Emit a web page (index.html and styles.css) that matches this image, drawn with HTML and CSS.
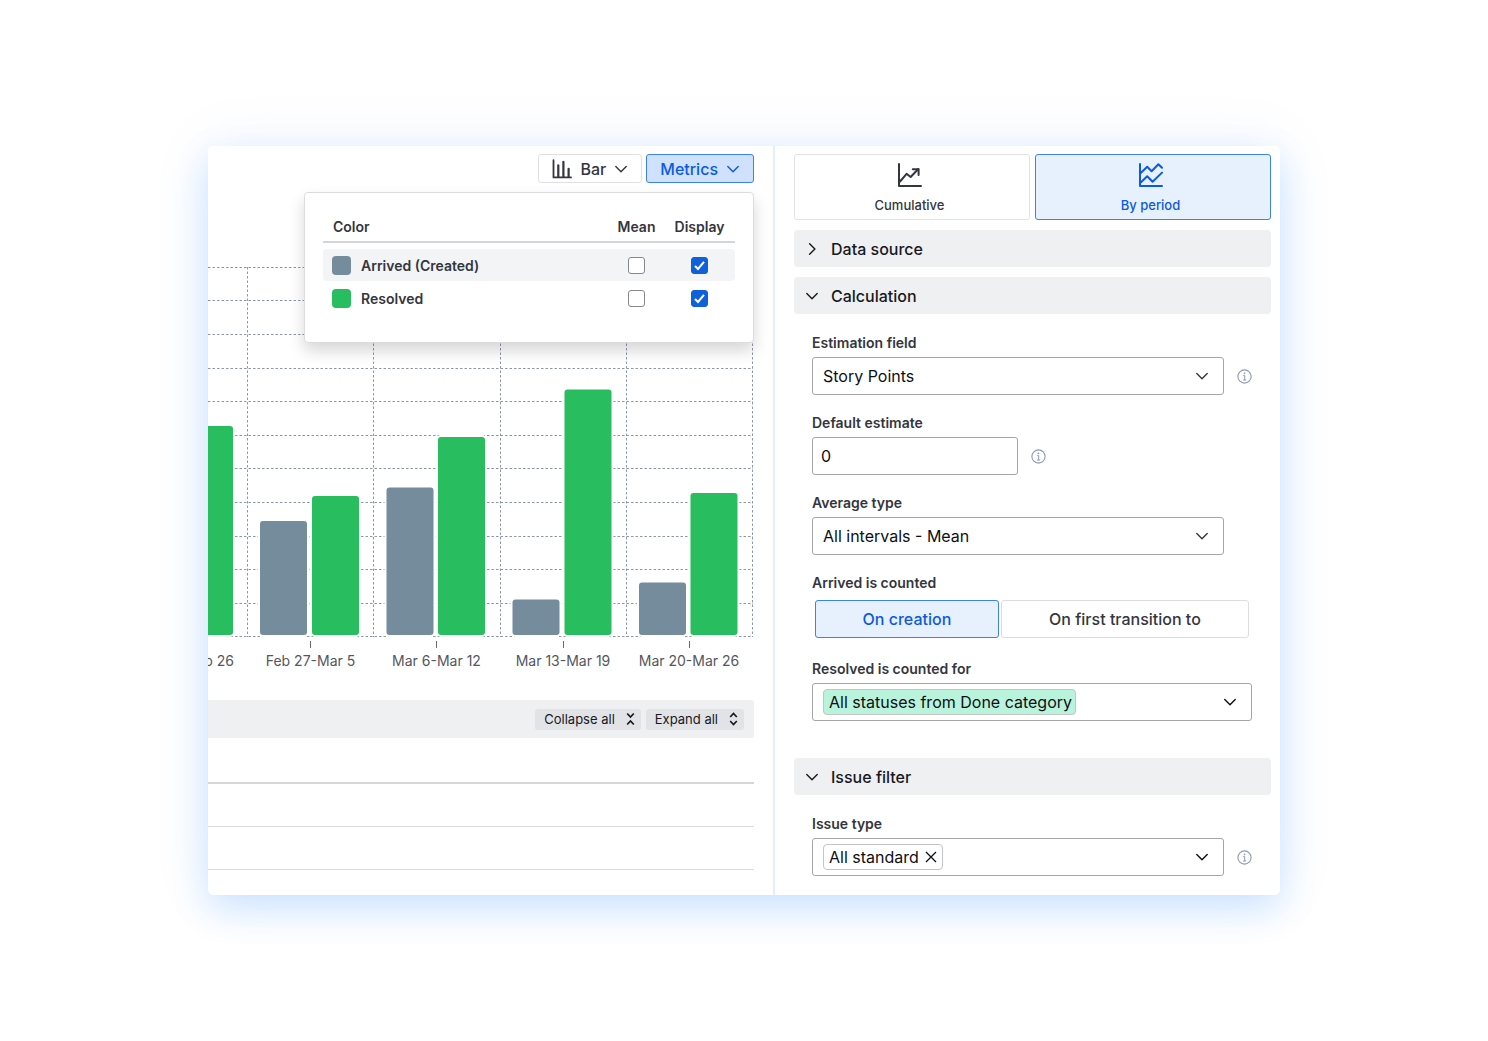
FILE: index.html
```html
<!DOCTYPE html>
<html lang="en">
<head>
    <meta charset="UTF-8">
    <meta name="viewport" content="width=device-width, initial-scale=1.0">
    <title>Created vs Resolved Chart</title>
    <link rel="stylesheet" href="styles.css">
</head>

<body>
    <!-- Shared icons -->
    <svg class="sprite" aria-hidden="true">
        <symbol id="chevron-down" viewBox="0 0 12 12">
            <path d="M0.8 3.4 L6 8.7 L11.2 3.4" fill="none" stroke="currentColor" stroke-width="1.4" stroke-linecap="round" stroke-linejoin="round"/>
        </symbol>
        <symbol id="chevron-right" viewBox="0 0 12 12">
            <path d="M3.6 0.8 L8.9 6 L3.6 11.2" fill="none" stroke="currentColor" stroke-width="1.4" stroke-linecap="round" stroke-linejoin="round"/>
        </symbol>
        <symbol id="info" viewBox="0 0 15 15">
            <circle cx="7.5" cy="7.5" r="6.6" fill="none" stroke="currentColor" stroke-width="1.1"/>
            <circle cx="7.5" cy="4.3" r="0.9" fill="currentColor"/>
            <path d="M6.1 6.6 H7.7 V11 M6 11 H9.2" fill="none" stroke="currentColor" stroke-width="1"/>
        </symbol>
    </svg>

    <main class="card">
        <!-- Chart side -->
        <section class="chart-pane">
            <div class="toolbar">
                <button type="button" class="tool-btn">
                    <svg class="bar-icon" viewBox="0 0 20 20" fill="none" stroke="currentColor" stroke-linecap="round" stroke-linejoin="round">
                        <path d="M1.5 1.2 V18.4 H19" stroke-width="1.8"/>
                        <path d="M6.3 6.3 V17.5 M11.4 2.8 V17.5 M16.6 9.8 V17.5" stroke-width="2.2"/>
                    </svg>
                    Bar
                    <svg class="chevron"><use href="#chevron-down"/></svg>
                </button>
                <button type="button" class="tool-btn active">
                    Metrics
                    <svg class="chevron"><use href="#chevron-down"/></svg>
                </button>

                <div class="popover">
                    <table class="metrics">
                        <thead>
                            <tr>
                                <th class="name-col">Color</th>
                                <th class="mean-col">Mean</th>
                                <th class="display-col">Display</th>
                            </tr>
                        </thead>
                        <tbody>
                            <tr class="highlight">
                                <td><span class="metric"><span class="swatch arrived"></span>Arrived (Created)</span></td>
                                <td><input type="checkbox" aria-label="Arrived mean"></td>
                                <td><input type="checkbox" aria-label="Display arrived" checked></td>
                            </tr>
                            <tr>
                                <td><span class="metric"><span class="swatch resolved"></span>Resolved</span></td>
                                <td><input type="checkbox" aria-label="Resolved mean"></td>
                                <td><input type="checkbox" aria-label="Display resolved" checked></td>
                            </tr>
                        </tbody>
                    </table>
                </div>
            </div>

            <svg class="chart" viewBox="0 0 546 438" role="img" aria-label="Arrived and resolved issues by week">
                <g class="grid">
                    <path d="M0 5.5 H545 M0 38.5 H545 M0 72.5 H545 M0 106.5 H545 M0 139.5 H545 M0 173.5 H545"/>
                    <path d="M0 206.5 H545 M0 240.5 H545 M0 274.5 H545 M0 307.5 H545 M0 341.5 H545 M0 374.5 H545"/>
                    <path d="M39.5 5 V375 M165.5 5 V375 M292.5 5 V375 M418.5 5 V375 M544.5 5 V375"/>
                </g>
                <g class="bar-arrived">
                    <rect x="52" y="259" width="47" height="114" rx="3"/>
                    <rect x="178.5" y="225.5" width="47" height="147.5" rx="3"/>
                    <rect x="304.5" y="337.5" width="47" height="35.5" rx="3"/>
                    <rect x="431" y="320.5" width="47" height="52.5" rx="3"/>
                </g>
                <g class="bar-resolved">
                    <rect x="-22" y="164" width="47" height="209" rx="3"/>
                    <rect x="104" y="234" width="47" height="139" rx="3"/>
                    <rect x="230" y="175" width="47" height="198" rx="3"/>
                    <rect x="356.5" y="127.5" width="47" height="245.5" rx="3"/>
                    <rect x="482.5" y="231" width="47" height="142" rx="3"/>
                </g>
                <path class="ticks" d="M102.5 379 V386 M228.5 379 V386 M355.5 379 V386 M481.5 379 V386"/>
                <g class="axis-labels">
                    <text x="-23" y="404">Feb 20-Feb 26</text>
                    <text x="102.5" y="404">Feb 27-Mar 5</text>
                    <text x="228.5" y="404">Mar 6-Mar 12</text>
                    <text x="355" y="404">Mar 13-Mar 19</text>
                    <text x="481" y="404">Mar 20-Mar 26</text>
                </g>
            </svg>

            <div class="list-bar">
                <button type="button" class="small-btn">
                    Collapse all
                    <svg viewBox="0 0 9 14"><path d="M1.2 1.5 L4.5 5 L7.8 1.5 M1.2 12.5 L4.5 9 L7.8 12.5"/></svg>
                </button>
                <button type="button" class="small-btn">
                    Expand all
                    <svg viewBox="0 0 9 14"><path d="M1.2 5 L4.5 1.5 L7.8 5 M1.2 9 L4.5 12.5 L7.8 9"/></svg>
                </button>
            </div>
            <div class="list">
                <div class="list-head"></div>
                <div class="list-row"></div>
                <div class="list-row"></div>
            </div>
        </section>

        <!-- Settings side -->
        <aside class="settings">
            <div class="tabs">
                <button type="button" class="tab">
                    <svg viewBox="0 0 24 24" fill="none" stroke="currentColor" stroke-width="2" stroke-linecap="round" stroke-linejoin="round">
                        <path d="M1 1 V23 H23"/>
                        <path d="M2 18.5 L8.6 10.8 L12.6 14 L20.3 6"/>
                        <path d="M14.8 6.2 H20.6 V12"/>
                    </svg>
                    Cumulative
                </button>
                <button type="button" class="tab active">
                    <svg viewBox="0 0 24 24" fill="none" stroke="currentColor" stroke-width="2" stroke-linecap="round" stroke-linejoin="round">
                        <path d="M1 1 V23 H23"/>
                        <path d="M2 9.8 L8.2 3.8 L12.6 8.2 L19.4 1.2 L23 4.8"/>
                        <path d="M2 19.3 L8.2 13.3 L13.6 18.7 L23 9.6"/>
                    </svg>
                    By period
                </button>
            </div>

            <button type="button" class="section-head">
                <svg class="chevron"><use href="#chevron-right"/></svg>
                Data source
            </button>

            <button type="button" class="section-head">
                <svg class="chevron"><use href="#chevron-down"/></svg>
                Calculation
            </button>
            <div class="section-body">
                <div class="field">
                    <label for="estimation">Estimation field</label>
                    <div class="control-row">
                        <div class="select">
                            <select id="estimation">
                                <option>Story Points</option>
                            </select>
                            <svg class="chevron"><use href="#chevron-down"/></svg>
                        </div>
                        <svg class="info"><use href="#info"/></svg>
                    </div>
                </div>

                <div class="field">
                    <label for="default-estimate">Default estimate</label>
                    <div class="control-row">
                        <input type="text" id="default-estimate" class="text-input" value="0">
                        <svg class="info"><use href="#info"/></svg>
                    </div>
                </div>

                <div class="field">
                    <label for="average">Average type</label>
                    <div class="control-row no-info">
                        <div class="select">
                            <select id="average">
                                <option>All intervals - Mean</option>
                            </select>
                            <svg class="chevron"><use href="#chevron-down"/></svg>
                        </div>
                    </div>
                </div>

                <div class="field">
                    <span class="label" id="arrived-label">Arrived is counted</span>
                    <div class="toggle" role="group" aria-labelledby="arrived-label">
                        <button type="button" class="active">On creation</button>
                        <button type="button">On first transition to</button>
                    </div>
                </div>

                <div class="field">
                    <span class="label" id="resolved-label">Resolved is counted for</span>
                    <div class="tag-select" role="combobox" tabindex="0" aria-expanded="false" aria-labelledby="resolved-label">
                        <span class="tag done">All statuses from Done category</span>
                        <svg class="chevron"><use href="#chevron-down"/></svg>
                    </div>
                </div>
            </div>

            <button type="button" class="section-head">
                <svg class="chevron"><use href="#chevron-down"/></svg>
                Issue filter
            </button>
            <div class="section-body last">
                <div class="field">
                    <span class="label" id="type-label">Issue type</span>
                    <div class="control-row">
                        <div class="tag-select" role="combobox" tabindex="0" aria-expanded="false" aria-labelledby="type-label">
                            <span class="tag">
                                All standard
                                <button type="button" class="remove" aria-label="Remove">
                                    <svg viewBox="0 0 12 12"><path d="M1 1 L11 11 M11 1 L1 11"/></svg>
                                </button>
                            </span>
                            <svg class="chevron"><use href="#chevron-down"/></svg>
                        </div>
                        <svg class="info"><use href="#info"/></svg>
                    </div>
                </div>
            </div>
        </aside>
    </main>
</body>
</html>
```

FILE: styles.css
```css
* {
    box-sizing: border-box;
}

body {
    margin: 0;
    padding: 146px 208px;
    background-color: white;
    color: #34363e;
    font-family: Inter, "Liberation Sans", sans-serif;
    font-size: 16px;
}

button, input, select {
    font: inherit;
    color: inherit;
    margin: 0;
}

button {
    cursor: pointer;
}

.sprite {
    display: none;
}

.chevron {
    width: 12px;
    height: 12px;
    flex: none;
}

.info {
    width: 15px;
    height: 15px;
    flex: none;
    color: #8c9bb5;
}

.card {
    display: flex;
    background-color: white;
    border-radius: 5px;
    box-shadow: 0 14px 36px rgba(40, 140, 255, 0.2), 0 0 60px rgba(40, 120, 255, 0.09);
}

/* Chart side */
.chart-pane {
    flex: 1;
    min-width: 0;
    padding: 8px 19px 0 0;
}

.toolbar {
    display: flex;
    justify-content: flex-end;
    gap: 4px;
    position: relative;
    margin-bottom: 79px;
}

.tool-btn {
    display: flex;
    align-items: center;
    gap: 9px;
    height: 29px;
    padding: 0 14px 0 13px;
    background-color: white;
    border: 1px solid #dfe0e2;
    border-radius: 3px;
    font-weight: 500;
}

.tool-btn.active {
    background-color: #cfe1fd;
    border-color: #3b82ee;
    color: #0c5ae0;
}

.bar-icon {
    width: 20px;
    height: 20px;
}

.popover {
    position: absolute;
    top: 38px;
    right: 0;
    width: 450px;
    height: 151px;
    padding: 17px 18px;
    background-color: white;
    border: 1px solid #dcdcde;
    border-radius: 4px;
    box-shadow: 0 8px 16px rgba(0, 0, 0, 0.16);
}

.metrics {
    width: 100%;
    border-spacing: 0 1px;
    font-size: 14px;
    font-weight: 600;
}

.metrics th {
    height: 32px;
    padding: 0;
    border-bottom: 2px solid #d5d6d8;
    font-weight: 600;
}

.metrics th.name-col {
    padding-left: 10px;
    text-align: left;
}

.mean-col {
    width: 55px;
}

.display-col {
    width: 71px;
}

.metrics tbody::before {
    content: "";
    display: block;
    height: 4px;
}

.metrics td {
    height: 32px;
    padding: 0;
    text-align: center;
}

.metrics td:first-child {
    padding-left: 9px;
    border-radius: 4px 0 0 4px;
}

.metrics td:last-child {
    border-radius: 0 4px 4px 0;
}

.highlight td {
    background-color: #f3f4f6;
}

.metric {
    display: flex;
    align-items: center;
    gap: 10px;
}

.swatch {
    width: 19px;
    height: 19px;
    border-radius: 4px;
}

.swatch.arrived {
    background-color: #748c9c;
}

.swatch.resolved {
    background-color: #28bd5f;
}

.metrics input {
    appearance: none;
    display: block;
    width: 17px;
    height: 17px;
    margin: 0 auto;
    background-color: white;
    border: 1px solid #85878f;
    border-radius: 3px;
}

.metrics input:checked {
    border-color: #1060dc;
    background: #1060dc url("data:image/svg+xml,%3Csvg xmlns='http://www.w3.org/2000/svg' viewBox='0 0 15 15'%3E%3Cpath d='M3 8 L6 11 L12 3.8' fill='none' stroke='white' stroke-width='2'/%3E%3C/svg%3E") center / 15px no-repeat;
}

.chart {
    display: block;
    width: 100%;
}

.grid {
    fill: none;
    stroke: #8d97ab;
    stroke-width: 1;
    stroke-dasharray: 2.5 2;
}

.bar-arrived,
.bar-resolved {
    stroke: white;
    stroke-width: 4;
    paint-order: stroke;
}

.bar-arrived {
    fill: #748c9c;
}

.bar-resolved {
    fill: #28bd5f;
}

.ticks {
    stroke: #6a6d75;
}

.axis-labels {
    fill: #55575e;
    font-size: 14px;
    text-anchor: middle;
}

.list-bar {
    display: flex;
    justify-content: flex-end;
    align-items: center;
    gap: 5px;
    height: 38px;
    padding-right: 10px;
    background-color: #eff0f2;
    border-radius: 0 3px 3px 0;
}

.small-btn {
    display: flex;
    align-items: center;
    gap: 11px;
    height: 21px;
    padding: 0 6px 0 9px;
    background-color: #e2e3e7;
    border: 0;
    border-radius: 3px;
    color: #17191f;
    font-size: 13px;
}

.small-btn svg {
    width: 9px;
    height: 14px;
    fill: none;
    stroke: currentColor;
    stroke-width: 1.7;
}

.list-head {
    height: 46px;
    border-bottom: 2px solid #d6d6d6;
}

.list-row {
    height: 43px;
    border-bottom: 1px solid #dcdcdc;
}

/* Settings side */
.settings {
    flex: 0 0 507px;
    padding: 8px 9px 0 19px;
    border-left: 2px solid #e3effe;
}

.tabs {
    display: flex;
    gap: 5px;
    margin-bottom: 10px;
}

.tab {
    display: flex;
    flex: 1;
    flex-direction: column;
    align-items: center;
    gap: 10px;
    height: 66px;
    padding: 8px 5px 0 0;
    background-color: white;
    border: 1px solid #e2e3e5;
    border-radius: 3px;
    font-size: 13px;
    font-weight: 500;
}

.tab svg {
    width: 24px;
    height: 24px;
}

.tab.active,
.toggle .active {
    background-color: #e7f1fe;
    border-color: #3b82ee;
    color: #0c5ae0;
}

.section-head {
    display: flex;
    align-items: center;
    gap: 13px;
    width: 100%;
    height: 37px;
    margin-bottom: 10px;
    padding: 0 12px;
    background-color: #eff0f2;
    border: 0;
    border-radius: 4px;
    color: #17191f;
    font-weight: 500;
}

.section-body {
    display: flex;
    flex-direction: column;
    gap: 18px;
    padding: 9px 19px 37px 18px;
}

.section-body.last {
    padding-bottom: 19px;
}

.field {
    display: flex;
    flex-direction: column;
    gap: 4px;
}

.field label,
.label {
    font-size: 14px;
    font-weight: 600;
    line-height: 20px;
}

.control-row {
    display: flex;
    align-items: center;
    gap: 13px;
}

.control-row.no-info {
    padding-right: 28px;
}

.select {
    position: relative;
    flex: 1;
}

.select select,
.text-input,
.tag-select {
    height: 38px;
    background-color: white;
    border: 1px solid #a3a5ab;
    border-radius: 3px;
    color: #0d0f14;
}

.select select {
    display: block;
    width: 100%;
    padding: 0 10px;
    appearance: none;
}

.select .chevron {
    position: absolute;
    top: 13px;
    right: 16px;
    pointer-events: none;
}

.text-input {
    width: 206px;
    padding: 0 8px;
}

.tag-select {
    display: flex;
    flex: 1 0 auto;
    align-items: center;
    justify-content: space-between;
    padding: 0 15px 0 10px;
}

.tag {
    display: flex;
    align-items: center;
    gap: 6px;
    height: 26px;
    padding: 0 5px;
    border: 1px solid #c3c5c9;
    border-radius: 4px;
}

.tag.done {
    padding: 0 3px 0 5px;
    background-color: #baf3db;
}

.remove {
    display: flex;
    padding: 0;
    background: none;
    border: 0;
}

.remove svg {
    width: 12px;
    height: 12px;
    stroke: currentColor;
    stroke-width: 1.3;
}

.toggle {
    display: flex;
    gap: 2px;
    margin: 3px;
}

.toggle button {
    flex: 249;
    height: 38px;
    padding: 0;
    background-color: white;
    border: 1px solid #dcdddf;
    border-radius: 3px;
    font-weight: 500;
}

.toggle button.active {
    flex: 184;
    background-color: #e7f1fe;
    border-color: #3b82ee;
}
```
